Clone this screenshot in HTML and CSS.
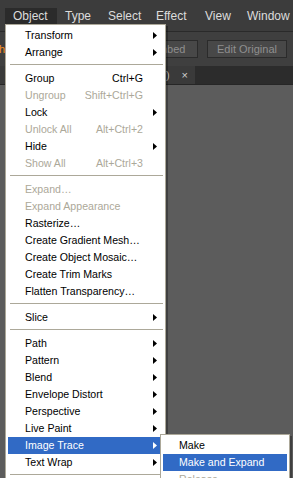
FILE: index.html
```html
<!doctype html>
<html>
<head>
<meta charset="utf-8">
<title>Object menu</title>
<link rel="stylesheet" href="styles.css">
</head>
<body>
<div class="app">
	<div class="menubar">
		<span class="mb on">Object</span>
		<span class="mb">Type</span>
		<span class="mb">Select</span>
		<span class="mb">Effect</span>
		<span class="mb">View</span>
		<span class="mb">Window</span>
	</div>
	<div class="ctrlbar">
		<span class="linked">h</span>
		<span class="btn">Embed</span>
		<span class="btn wide">Edit Original</span>
	</div>
	<div class="tabbar">
		<div class="tab"><span class="tab_t">logo.ai (RGB/Preview)</span><span class="tab_x">×</span></div>
	</div>
	<div class="canvas"></div>
</div>

<div class="menu main">
	<div class="item sub">Transform</div>
	<div class="item sub">Arrange</div>
	<div class="sep"></div>
	<div class="item"><span class="lbl">Group</span><span class="key">Ctrl+G</span></div>
	<div class="item dis"><span class="lbl">Ungroup</span><span class="key">Shift+Ctrl+G</span></div>
	<div class="item sub">Lock</div>
	<div class="item dis"><span class="lbl">Unlock All</span><span class="key">Alt+Ctrl+2</span></div>
	<div class="item sub">Hide</div>
	<div class="item dis"><span class="lbl">Show All</span><span class="key">Alt+Ctrl+3</span></div>
	<div class="sep"></div>
	<div class="item dis">Expand…</div>
	<div class="item dis">Expand Appearance</div>
	<div class="item">Rasterize…</div>
	<div class="item">Create Gradient Mesh…</div>
	<div class="item">Create Object Mosaic…</div>
	<div class="item">Create Trim Marks</div>
	<div class="item">Flatten Transparency…</div>
	<div class="sep"></div>
	<div class="item sub">Slice</div>
	<div class="sep"></div>
	<div class="item sub">Path</div>
	<div class="item sub">Pattern</div>
	<div class="item sub">Blend</div>
	<div class="item sub">Envelope Distort</div>
	<div class="item sub">Perspective</div>
	<div class="item sub">Live Paint</div>
	<div class="item sub hl">Image Trace</div>
	<div class="item sub">Text Wrap</div>
	<div class="sep"></div>
</div>

<div class="menu submenu">
	<div class="item">Make</div>
	<div class="item hl">Make and Expand</div>
	<div class="item dis">Release</div>
</div>
</body>
</html>
```

FILE: styles.css
```css
*{margin:0; padding:0; box-sizing:border-box;}
html,body{height:100%;}
body{background:#5c5c5c; overflow:hidden; position:relative; font-family:"Liberation Sans",Arial,sans-serif;}

.app{display:flex; flex-direction:column; height:100%;}

.menubar{height:32px; background:#3c3c3c; border-bottom:1px solid #2a2a2a; display:grid; grid-template-columns:52px 43px 48px 49px 42px auto; align-content:start; padding:8px 0 0 5px;}
.mb{height:16px; line-height:16px; padding-left:8px; color:#dcdcdc; font-size:12px; white-space:nowrap;}
.mb.on{background:#2b2b2b;}

.ctrlbar{height:34px; background:#3f3f3f; display:flex; align-items:center; gap:9px; padding-right:6px;}
.linked{color:#f7931e; font-size:11px; margin-right:auto; margin-left:-1px;}
.btn{width:60px; height:18px; border:1px solid #2b2b2b; background:#484848; color:#8f8f8f; font-size:11px; line-height:16px; text-align:center;}
.btn.wide{width:80px;}

.tabbar{height:19px; background:#2c2c2c; display:flex; border-bottom:1px solid #262626;}
.tab{width:195px; background:#3a3a3a; display:flex; justify-content:flex-end; align-items:center; gap:12px; padding-right:7px; overflow:hidden; color:#bdbdbd; font-size:11px; white-space:nowrap;}
.tab_t{flex-shrink:0;}
.tab_x{font-size:11px; color:#d0d0d0;}

.canvas{flex:1; background:#5c5c5c;}

.menu{position:absolute; background:#fff; border:1px solid #aca899; padding:2px; box-shadow:2px 2px 0 rgba(0,0,0,.3); font-size:10.6px; color:#000;}
.main{left:5px; top:24px; width:161px;}
.submenu{left:160px; top:434px; width:130px;}

.item{display:flex; align-items:center; height:17px; line-height:17px; padding:0 6px 0 17px; white-space:nowrap;}
.item .lbl{flex:1;}
.item::after{content:''; width:4px; height:7px; margin-left:10px;}
.item.sub::after{background:#000; clip-path:polygon(0 0,100% 50%,0 100%);}
.main .item:not(:has(.lbl))::after{margin-left:auto;}
.dis{color:#aca899;}
.hl{background:#316ac5; color:#fff;}
.hl.sub::after{background:#fff;}
.submenu .item{padding-left:16px;}

.sep{height:1px; margin:3px 0 5px 2px; background:#aca899;}
```
